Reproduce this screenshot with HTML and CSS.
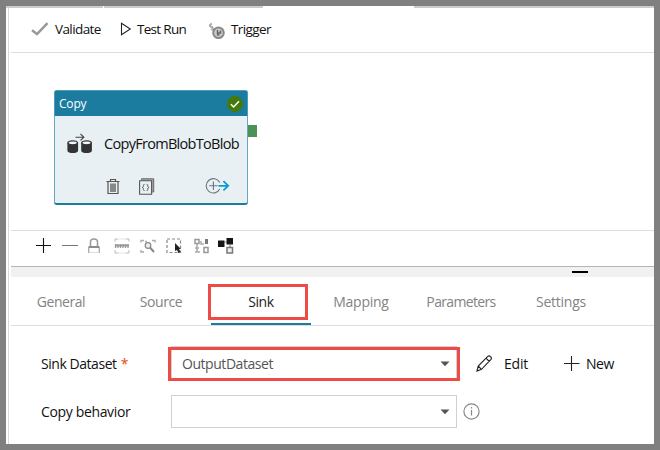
FILE: index.html
```html
<!DOCTYPE html>
<html lang="en">
<head>
<meta charset="utf-8">
<title>Pipeline</title>
<link rel="stylesheet" href="styles.css">
</head>
<body>
<div class="window">
  <div class="tabstrip"><span class="t1"></span><span class="t2"></span><span class="t3"></span></div>
  <div class="body">
    <header class="toolbar">
      <svg class="ic-check" width="18" height="14" viewBox="0 0 18 14"><path d="M1 8.2 6 12 16.5 1.2" fill="none" stroke="#999" stroke-width="2.5"/></svg>
      <span class="w-validate">Validate</span>
      <svg class="ic-play" width="12" height="14" viewBox="0 0 12 14"><path d="M1.500 1.200v11.600L10.300 7z" fill="none" stroke="#222" stroke-width="1.100"/></svg>
      <span class="w-test">Test Run</span>
      <svg class="ic-trigger" width="18" height="18" viewBox="0 0 18 18"><path d="M4 2C1 2 1.500 5 4 5l2 4" fill="none" stroke="#aaa" stroke-width="2"/><path d="M3 7l3 2" stroke="#bbb" stroke-width="2"/><circle cx="10.500" cy="10.700" r="5.300" fill="#ccc" stroke="#888" stroke-width="2"/><path d="M9.500 8v5M9.500 11h3V8.500M9.500 13h2" fill="none" stroke="#666" stroke-width="1.500"/></svg>
      <span class="w-trigger">Trigger</span>
    </header>
    <main class="canvas">
      <div class="node">
        <div class="node-head"><span class="w-copy">Copy</span>
          <svg width="16" height="16" viewBox="0 0 16 16"><circle cx="8" cy="8" r="8" fill="#447a0c"/><path d="M3.900 8.200 6.600 11 12 5.300" fill="none" stroke="#fff" stroke-width="1.500"/></svg>
        </div>
        <div class="node-main">
          <svg width="26" height="21" viewBox="0 0 26 21"><path d="M8.500 4.200h8M13.500 1l3.400 3.200-3.400 3.200" fill="none" stroke="#444" stroke-width="1.100"/><path d="M.4 9.500v8.200c0 3.200 10.700 3.200 10.700 0V9.500zM14.200 9.500v8.200c0 3.200 10.700 3.200 10.700 0V9.500z" fill="#333"/><ellipse cx="5.750" cy="9.800" rx="4.700" ry="2" fill="#f2f6f7" stroke="#333" stroke-width="1.300"/><ellipse cx="19.550" cy="9.800" rx="4.700" ry="2" fill="#f2f6f7" stroke="#333" stroke-width="1.300"/></svg>
          <span class="w-name">CopyFromBlobToBlob</span>
        </div>
        <div class="node-actions">
          <svg class="ic-trash" width="14" height="17" viewBox="0 0 14 17"><path d="M.5 3.500h13M4.500 3.500v-2h5v2M2 4v11.500h10V4" fill="none" stroke="#555" stroke-width="1.200"/><path d="M4 5.500h6v8.500H4z" fill="#888"/></svg>
          <svg class="ic-json" width="16" height="17" viewBox="0 0 16 17"><path d="M2.500 2V.8h12.200V14h-1.500" fill="#aaa" stroke="#666"/><path d="M.6 2.800h12v13.500H.6z" fill="#e8f0f3" stroke="#555" stroke-width="1.100"/><path d="M5.500 6.400c-1.300 0-1.100.8-1.100 1.500S4.200 9.400 3.300 9.500c.9.100 1.100.8 1.100 1.500s-.2 1.500 1.100 1.500M7.700 6.400c1.300 0 1.100.8 1.100 1.500s.2 1.500 1.100 1.600c-.9.100-1.100.8-1.100 1.500s.2 1.500-1.100 1.500" fill="none" stroke="#555" stroke-width="1"/></svg>
          <svg class="ic-out" width="26" height="18" viewBox="0 0 26 18"><path d="M14.800 5.500a7.200 7.200 0 1 0 0 6.600M4.200 8.800h8.500M8.400 4.500v8.600" fill="none" stroke="#667681" stroke-width="1.100"/><path d="M13.500 8.800h9.500M18.400 4.200 23.200 8.800l-4.800 4.600" fill="none" stroke="#0b9bd1" stroke-width="1.800"/></svg>
        </div>
        <i class="port"></i>
      </div>
    </main>
    <div class="tools">
      <svg width="15" height="15" viewBox="0 0 15 15"><path d="M7.500 0v15M0 7.500h15" stroke="#111" stroke-width="1.100"/></svg>
      <svg class="g1" width="16" height="15" viewBox="0 0 16 15"><path d="M0 7.500h16" stroke="#777"/></svg>
      <svg class="g2" width="12" height="15" viewBox="0 0 12 15"><path d="M2.500 8V4C2.500 0 9.500 0 9.500 4v4" fill="none" stroke="#999" stroke-width="1.500"/><path d="M.7 15V8.500M11.300 8.500V15" fill="none" stroke="#aaa" stroke-width="1.300"/><path d="M1 9h10" stroke="#666" stroke-width="1.500"/><path d="M1 14.500h10" stroke="#ddd"/></svg>
      <svg class="g3" width="16" height="16" viewBox="0 0 16 16"><path d="M1 3.500V1h3M12 1h3v2.500M1 12v3h3M12 15h3v-3" fill="none" stroke="#bbb"/><path d="M4 1h8M4 15h8" stroke="#e5e5e5"/><path d="M1.500 6v4M4 6v4M6.500 6v4M9 6v4M11.500 6v4M14 6v4" stroke="#999" stroke-width="1.300"/><path d="M1 7.500h14" stroke="#999" stroke-width="2"/></svg>
      <svg class="g4" width="16" height="15" viewBox="0 0 16 15"><path d="M1 4.500V2.500h3M12 2.500h3v2M1 12v2h3M5 3.500h2" fill="none" stroke="#aaa" stroke-width="1.400"/><circle cx="8" cy="7.500" r="2.800" fill="#eee" stroke="#888" stroke-width="1.200"/><path d="m10 9.500 4 4.500" stroke="#888" stroke-width="2"/></svg>
      <svg class="g5" width="16" height="16" viewBox="0 0 16 16"><path d="M1 1h13.500v13.500H1z" fill="none" stroke="#888" stroke-width="1.200" stroke-dasharray="3 2"/><path d="M9 5v8l2-1 1.500 3 2-1-1.500-3h2z" fill="#222"/></svg>
      <svg class="g6" width="15" height="16" viewBox="0 0 15 16"><path d="M1 1.500h4v4H1zM10 9.500h4v5h-4z" fill="#fff" stroke="#999" stroke-width="1.500"/><path d="M3 6v8M1 10h4M1 14h5M7 3v3h3" stroke="#aaa" fill="none" stroke-width="1.500"/><path d="M11 1h3v5h-3z" fill="#777"/></svg>
      <svg class="g7" width="16" height="16" viewBox="0 0 16 16"><path d="M0 2.500h6.500V9H0zM8.500 0H15v6.500H8.500z" fill="#151515"/><path d="M6 4h3M12 6v3" stroke="#777"/><path d="M9 9.500h5.500V15H9z" fill="#eee" stroke="#777" stroke-width="1.500"/></svg>
    </div>
    <div class="splitter"><i></i></div>
    <nav class="tabs">
      <span class="w-general">General</span><span class="w-source">Source</span><span class="active w-sink">Sink<i class="mark"></i></span><span class="w-mapping">Mapping</span><span class="w-parameters">Parameters</span><span class="w-settings">Settings</span>
    </nav>
    <section class="form">
      <div class="row first">
        <label class="w-dataset">Sink Dataset<b>*</b></label>
        <div class="select"><span class="w-output">OutputDataset</span><svg width="10" height="6" viewBox="0 0 10 6"><path d="M.5.5h9L5 5.200z" fill="#555"/></svg><i class="mark"></i></div>
        <svg class="ic-pen" width="17" height="17" viewBox="0 0 17 17"><path d="M1 16l1.200-5L11.800 1.400c1.600-1.500 4.600 1.300 3.200 3L5.500 14.300zM2.200 11l3.300 3.300M10 3.200l3.300 3.300" fill="none" stroke="#222" stroke-width="1.100"/></svg>
        <span class="w-edit">Edit</span>
        <svg class="ic-new" width="16" height="15" viewBox="0 0 16 15"><path d="M7.500 0v15M0 7.500h15.500" stroke="#222" stroke-width="1.100"/></svg>
        <span class="w-new">New</span>
      </div>
      <div class="row">
        <label class="w-behavior">Copy behavior</label>
        <div class="select"><span></span><svg width="10" height="6" viewBox="0 0 10 6"><path d="M.5.5h9L5 5.200z" fill="#555"/></svg></div>
        <svg class="ic-info" width="17" height="17" viewBox="0 0 17 17"><circle cx="8.500" cy="8.500" r="7.600" fill="none" stroke="#888" stroke-width="1.200"/><path d="M8.500 7v5.500M8.500 4v1.500" stroke="#888" stroke-width="1.200"/></svg>
      </div>
    </section>
  </div>
</div>
</body>
</html>
```
FILE: styles.css
```css
* { box-sizing: border-box; }
body { margin: 0; font: 14px/18px "Open Sans", "Noto Sans", sans-serif; letter-spacing: -.45px; color: #111; }
svg { display: block; flex: none; }
span, label { white-space: nowrap; }
.window { width: 660px; height: 450px; border: 6px solid #808080; background: #fff; overflow: hidden; }
.tabstrip { display: flex; height: 2px; }
.tabstrip span { background: #ccc; }
.t1 { width: 97px; }
.t2 { width: 159px; margin-left: 1px; }
.t3 { flex: 1; margin-left: 151px; }
.body { height: 436px; margin-left: 2px; border-left: 1px solid #d9d9d9; padding-left: 2px; }
.toolbar { display: flex; align-items: center; height: 45px; border-bottom: 1px solid #ddd; padding: 0 0 2px 20px; font-size: 13.5px; letter-spacing: -.6px; }
.toolbar .w-validate { width: 65px; margin-left: 6px; }
.ic-play { margin-right: 5px; }
.toolbar .w-test { width: 71px; letter-spacing: -.7px; }
.ic-trigger { margin: 3px 5px 0 0; }
.canvas { height: 177px; padding: 37px 0 0 43px; }
.node { position: relative; width: 194px; height: 115px; border: 1px solid #4e9bba; border-bottom: 2px solid #1b7c9f; border-radius: 3px; background: #e8f0f3; }
.node::after { content: ""; position: absolute; inset: 25px -1px -1px; border: solid #65a8c2; border-width: 0 1px; pointer-events: none; }
.node-head { display: flex; justify-content: space-between; align-items: center; height: 25px; padding: 1px 4px 0 4px; background: #1b7c9f; color: #fff; font-size: 12px; letter-spacing: -.2px; }
.node-main { display: flex; align-items: center; height: 55px; padding-left: 12px; font-size: 14.5px; letter-spacing: -.7px; }
.node-main svg { margin-right: 11px; }
.node-actions { display: flex; align-items: center; height: 30px; padding-left: 51px; }
.ic-json { margin-left: 19px; }
.ic-out { margin-left: 50px; }
.port { position: absolute; left: 192px; top: 34px; width: 10px; height: 12px; background: #4c9155; }
.tools { display: flex; align-items: center; height: 36px; border-top: 1px solid #ddd; padding: 0 0 6px 25px; }
.g1 { margin-left: 11px; }
.g2 { margin-left: 10px; }
.g3 { margin-left: 14px; }
.g4 { margin-left: 10px; }
.g5 { margin-left: 10px; }
.g6 { margin-left: 12px; }
.g7 { margin-left: 9px; }
.splitter { height: 11px; border-top: 1px solid #b5b5b5; background: #f1f1f1; padding: 4px 0 0 561px; }
.splitter i { display: block; width: 16px; height: 2px; background: #000; }
.tabs { display: grid; grid-template-columns: repeat(6, 100px); height: 49px; border-bottom: 1px solid #ddd; color: #838383; }
.tabs > span { padding-top: 16px; height: 48px; text-align: center; }
.tabs .active { position: relative; color: #222; border-bottom: 2px solid #1b7c9f; }
.tabs .w-parameters { letter-spacing: -.65px; }
.tabs .w-settings, .tabs .w-mapping { letter-spacing: -.25px; }
.mark { position: absolute; border: 3px solid #ed4b45; }
.active .mark { left: -3px; top: 7px; width: 100px; height: 36px; }
.form { padding: 20px 0 0 30px; }
.row { display: flex; align-items: center; height: 33px; }
.row.first { height: 34px; margin-bottom: 15px; }
.row label { width: 130px; }
.first > label, .first > span, .first > svg, .first .select > span, .first .select > svg { padding-top: 2px; }
.row .w-behavior { letter-spacing: -.35px; }
label b { color: #e04a20; font-weight: 400; margin-left: 4px; }
.select { position: relative; display: flex; align-items: center; justify-content: space-between; width: 286px; height: 100%; border: 1px solid #d0d0d0; padding: 0 6px 0 10px; color: #555; }
.select .mark { left: -4px; top: 0; width: 292px; height: 34px; }
.first > svg, .first .select > svg { padding-top: 0; margin-top: 1px; }
.ic-pen { margin: 0 11px 0 19px; }
.row .w-edit { width: 60px; letter-spacing: -.2px; }
.ic-new { margin-right: 6px; }
.ic-info { margin-left: 6px; }
```
